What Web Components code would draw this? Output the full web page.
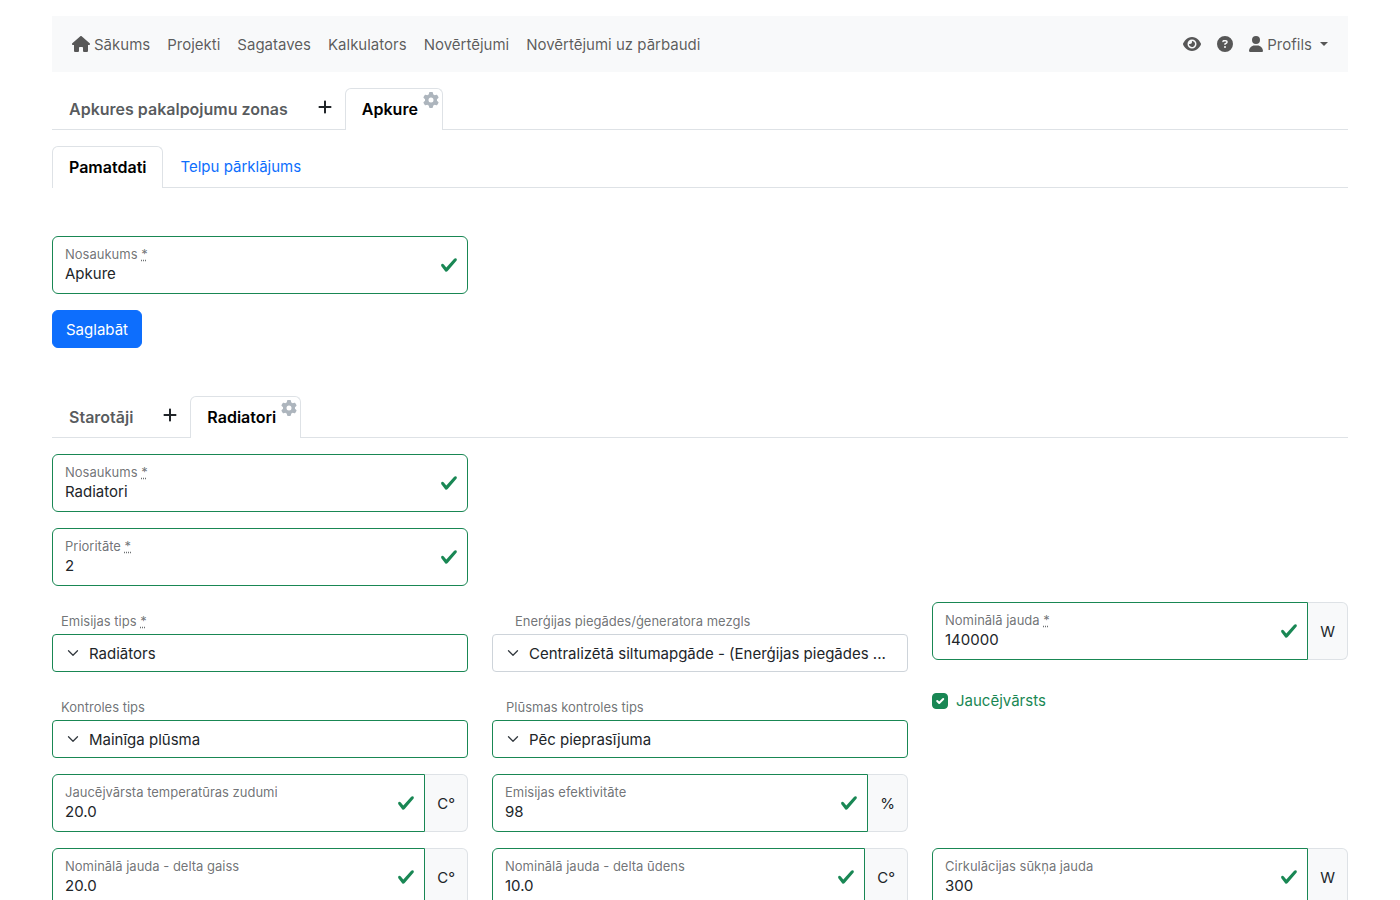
<!DOCTYPE html>
<html lang="lv">
<head>
<meta charset="utf-8">
<meta name="viewport" content="width=device-width, initial-scale=1">
<title>Apkure</title>
<style>
  body {
    margin: 0;
    background: #fff;
    color: #212529;
    font: 400 15px/24px Inter, "Liberation Sans", sans-serif;
    --success: #198754;
    --border: #dee2e6;
    --muted: rgba(33, 37, 41, .65);
    --primary: #0d6efd;
    --light: #f8f9fa;
  }
</style>
</head>
<body>
<page-container>
  <app-navbar>
    <nav-link icon="house">Sākums</nav-link>
    <nav-link>Projekti</nav-link>
    <nav-link>Sagataves</nav-link>
    <nav-link>Kalkulators</nav-link>
    <nav-link>Novērtējumi</nav-link>
    <nav-link>Novērtējumi uz pārbaudi</nav-link>
    <nav-link slot="end" icon="eye" label="Skats"></nav-link>
    <nav-link slot="end" icon="question" label="Palīdzība"></nav-link>
    <nav-link slot="end" icon="user" caret>Profils</nav-link>
  </app-navbar>

  <tab-bar>
    <tab-item kind="title">Apkures pakalpojumu zonas</tab-item>
    <tab-add label="Pievienot zonu"></tab-add>
    <tab-item kind="active" settings>Apkure</tab-item>
  </tab-bar>

  <tab-bar>
    <tab-item kind="active">Pamatdati</tab-item>
    <tab-item kind="link">Telpu pārklājums</tab-item>
  </tab-bar>

  <form-section>
    <form-grid>
      <text-field value="Apkure" required alone>Nosaukums</text-field>
      <submit-button>Saglabāt</submit-button>
    </form-grid>
  </form-section>

  <tab-bar>
    <tab-item kind="title">Starotāji</tab-item>
    <tab-add label="Pievienot starotāju"></tab-add>
    <tab-item kind="active" settings>Radiatori</tab-item>
  </tab-bar>

  <form-grid>
    <text-field value="Radiatori" required alone>Nosaukums</text-field>
    <text-field value="2" required alone>Prioritāte</text-field>
    <select-field value="Radiātors" required valid>Emisijas tips</select-field>
    <select-field value="Centralizētā siltumapgāde - (Enerģijas piegādes ..." indent="wide">Enerģijas piegādes/ģeneratora mezgls</select-field>
    <text-field value="140000" unit="W" required>Nominālā jauda</text-field>
    <select-field value="Mainīga plūsma" valid>Kontroles tips</select-field>
    <select-field value="Pēc pieprasījuma" valid indent="medium">Plūsmas kontroles tips</select-field>
    <check-field>Jaucējvārsts</check-field>
    <text-field value="20.0" unit="C°">Jaucējvārsta temperatūras zudumi</text-field>
    <text-field value="98" unit="%">Emisijas efektivitāte</text-field>
    <text-field value="20.0" unit="C°" first>Nominālā jauda - delta gaiss</text-field>
    <text-field value="10.0" unit="C°">Nominālā jauda - delta ūdens</text-field>
    <text-field value="300" unit="W">Cirkulācijas sūkņa jauda</text-field>
  </form-grid>
</page-container>

<script>
const ICONS = {
  house: ['0 0 576 512', 'M575.8 255.5c0 18-15 32.1-32 32.1h-32l.7 160.2c0 2.7-.2 5.4-.5 8.1V472c0 22.1-17.9 40-40 40H392c-22.1 0-40-17.9-40-40V384c0-17.7-14.3-32-32-32H256c-17.7 0-32 14.300-32 32v88c0 22.100-17.900 40-40 40H104c-22.100 0-40-17.900-40-40V287.600H32c-18 0-32-14-32-32.100c0-9 3-17 10-24L266.400 8c7-7 15-8 22-8s15 2 21 7L564.800 231.500c8 7 12 15 11 24z'],
  eye: ['0 0 576 512', 'M288 32c-80.800 0-145.500 36.800-192.600 80.600C48.600 156 17.300 208 2.500 243.700c-3.300 7.900-3.300 16.700 0 24.600C17.300 304 48.600 356 95.400 399.400C142.500 443.200 207.200 480 288 480s145.500-36.800 192.600-80.600c46.800-43.500 78.100-95.400 93-131.100c3.300-7.900 3.300-16.700 0-24.600c-14.900-35.700-46.200-87.700-93-131.100C433.500 68.800 368.800 32 288 32zM144 256a144 144 0 1 1 288 0a144 144 0 1 1-288 0zm144-64c0 35.300-28.700 64-64 64c-7.100 0-13.900-1.200-20.300-3.300c-5.500-1.800-11.900 1.600-11.700 7.400c.3 6.900 1.300 13.800 3.200 20.700c13.700 51.200 66.400 81.600 117.600 67.900s81.600-66.400 67.900-117.600c-11.100-41.500-47.800-69.400-88.600-71.100c-5.800-.2-9.200 6.100-7.400 11.700c2.100 6.400 3.300 13.200 3.300 20.300z'],
  question: ['0 0 512 512', 'M256 512A256 256 0 1 0 256 0a256 256 0 1 0 0 512zM169.800 165.300c7.900-22.300 29.100-37.300 52.800-37.300h58.300c34.900 0 63.100 28.300 63.100 63.100c0 22.600-12.100 43.500-31.700 54.800L280 264.400c-.2 13-10.900 23.600-24 23.600c-13.300 0-24-10.700-24-24V250.500c0-8.600 4.600-16.500 12.100-20.800l44.300-25.400c4.700-2.700 7.600-7.700 7.600-13.100c0-8.400-6.800-15.100-15.100-15.100H222.600c-3.400 0-6.400 2.100-7.500 5.300l-.4 1.200c-4.400 12.500-18.200 19-30.600 14.600s-19-18.200-14.600-30.600l.4-1.200zM224 352a32 32 0 1 1 64 0a32 32 0 1 1-64 0z'],
  user: ['0 0 448 512', 'M224 256A128 128 0 1 0 224 0a128 128 0 1 0 0 256zm-45.700 48C79.800 304 0 383.800 0 482.300C0 498.700 13.300 512 29.700 512H418.300c16.400 0 29.700-13.300 29.700-29.700C448 383.800 368.200 304 269.700 304H178.300z'],
  gear: ['0 0 512 512', 'M495.900 166.600c3.200 8.700.5 18.400-6.400 24.600l-43.300 39.400c1.100 8.300 1.700 16.800 1.700 25.400s-.6 17.100-1.700 25.400l43.300 39.400c6.900 6.200 9.600 15.900 6.400 24.600c-4.400 11.900-9.700 23.300-15.800 34.300l-4.700 8.100c-6.600 11-14 21.400-22.100 31.200c-5.900 7.200-15.700 9.600-24.500 6.800l-55.700-17.700c-13.400 10.300-28.200 18.900-44 25.400l-12.500 57.100c-2 9.100-9 16.300-18.200 17.800c-13.800 2.300-28 3.500-42.500 3.500s-28.700-1.200-42.500-3.500c-9.200-1.500-16.200-8.700-18.200-17.800l-12.500-57.100c-15.800-6.500-30.600-15.100-44-25.400L83.100 425.900c-8.800 2.800-18.600.3-24.500-6.800c-8.100-9.800-15.500-20.200-22.100-31.200l-4.700-8.100c-6.100-11-11.400-22.400-15.800-34.300c-3.200-8.700-.5-18.400 6.400-24.600l43.300-39.400C64.600 273.100 64 264.600 64 256s.6-17.100 1.700-25.400L22.400 191.200c-6.900-6.200-9.600-15.900-6.400-24.600c4.400-11.900 9.700-23.300 15.800-34.300l4.700-8.100c6.600-11 14-21.400 22.100-31.200c5.900-7.200 15.700-9.600 24.500-6.800l55.700 17.700c13.400-10.300 28.200-18.900 44-25.400l12.500-57.100c2-9.100 9-16.300 18.200-17.800C227.300 1.200 241.500 0 256 0s28.700 1.200 42.500 3.500c9.200 1.500 16.200 8.700 18.200 17.800l12.500 57.100c15.800 6.500 30.600 15.100 44 25.400l55.700-17.700c8.800-2.800 18.600-.3 24.500 6.800c8.100 9.800 15.500 20.200 22.100 31.200l4.700 8.100c6.100 11 11.400 22.400 15.800 34.300zM256 336a80 80 0 1 0 0-160a80 80 0 1 0 0 160z'],
  plus: ['0 0 448 512', 'M256 80c0-17.700-14.300-32-32-32s-32 14.300-32 32V224H48c-17.700 0-32 14.300-32 32s14.300 32 32 32H192V432c0 17.700 14.300 32 32 32s32-14.300 32-32V288H400c17.700 0 32-14.300 32-32s-14.300-32-32-32H256V80z'],
  valid: ['0 0 8 8', 'M2.300 6.730.600 4.530c-.4-1.040.46-1.400 1.100-.8l1.100 1.400 3.400-3.800c.6-.63 1.600-.27 1.200.7l-4 4.600c-.43.5-.8.4-1.100.1z']
};
const icon = name => {
  const [box, d] = ICONS[name];
  return `<svg viewBox="${box}" aria-hidden="true"><path fill="currentColor" d="${d}"/></svg>`;
};
const base = '*{box-sizing:border-box} svg{display:block;flex:none}';
const star = '<abbr title="obligāts">*</abbr>';

function define(name, css, render) {
  customElements.define(name, class extends HTMLElement {
    connectedCallback() {
      if (this.shadowRoot) return;
      this.attachShadow({ mode: 'open' }).innerHTML =
        `<style>${base}${css}</style>${render(this)}`;
    }
  });
}

define('page-container', `
  :host{display:block;box-sizing:border-box;max-width:1320px;margin:0 auto;padding:16px 12px}
  main{display:flex;flex-direction:column;gap:16px}`,
  () => '<main><slot></slot></main>');

define('app-navbar', `
  :host{display:block}
  nav{display:flex;justify-content:space-between;align-items:center;min-height:56px;padding:8px 12px;background:var(--light)}
  div{display:flex}
  .start{gap:1px}`,
  () => '<nav><div class="start"><slot></slot></div><div><slot name="end"></slot></div></nav>');

define('nav-link', `
  :host{display:block}
  a{display:flex;align-items:center;gap:4px;height:40px;padding:0 8px;color:rgba(0,0,0,.65);text-decoration:none;white-space:nowrap}
  svg{height:16px}
  .text{padding-top:1px}
  .caret{margin-left:4px;border:4px solid transparent;border-top-color:currentColor;border-bottom:0}`,
  el => {
    const name = el.getAttribute('icon');
    const label = el.getAttribute('label');
    return `<a href="#"${label ? ` aria-label="${label}"` : ''}>${name ? icon(name) : ''}${label ? '' : '<span class="text"><slot></slot></span>'}${el.hasAttribute('caret') ? '<span class="caret"></span>' : ''}</a>`;
  });

define('tab-bar', `
  :host{display:block}
  nav{display:flex;height:42px;box-shadow:inset 0 -1px var(--border)}`,
  () => '<nav><slot></slot></nav>');

define('tab-item', `
  :host{display:block;position:relative}
  a{display:block;height:42px;padding:8px 16px;border:1px solid transparent;border-bottom:0;border-radius:6px 6px 0 0;text-decoration:none;white-space:nowrap}
  .title{font-size:16px;font-weight:600;color:rgba(33,37,41,.75)}
  .active{font-size:16px;font-weight:600;color:#000;background:#fff;border-color:var(--border)}
  .link{color:var(--primary)}
  .settings{padding-right:24px}
  button{position:absolute;top:4px;right:4px;padding:0;border:0;background:none;color:#adb5bd}
  button svg{width:16px;height:16px}`,
  el => {
    const s = el.hasAttribute('settings');
    return `<a href="#" class="${el.getAttribute('kind')}${s ? ' settings' : ''}"><slot></slot></a>${s ? `<button type="button" aria-label="Iestatījumi">${icon('gear')}</button>` : ''}`;
  });

define('tab-add', `
  :host{display:block}
  button{display:flex;justify-content:center;align-items:center;width:40px;height:38px;padding:0;border:0;background:none;color:#212529}
  svg{height:16px}`,
  el => `<button type="button" aria-label="${el.getAttribute('label')}">${icon('plus')}</button>`);

define('form-section', `
  :host{display:block;padding:32px 0}`,
  () => '<slot></slot>');

define('form-grid', `
  :host{display:block}
  form{display:grid;grid-template-columns:repeat(3,minmax(0,1fr));gap:16px 24px;align-items:start}
  ::slotted([alone]){grid-column:1 / -1;width:calc((100% - 48px) / 3)}
  ::slotted([first]){grid-column-start:1}`,
  () => '<form><slot></slot></form>');

define('text-field', `
  :host{display:block}
  .group{display:flex;height:58px}
  .box{display:flex;align-items:center;flex:1;min-width:0;padding:0 9px 0 12px;border:1px solid var(--success);border-radius:6px;background:#fff}
  .box.joined{border-radius:6px 0 0 6px}
  .text{flex:1;min-width:0;padding-top:2px}
  label{display:block;font-size:13px;line-height:16px;color:var(--muted)}
  abbr{text-decoration:underline dotted}
  input{display:block;width:100%;height:24px;padding:0;border:0;outline:0;background:none;font:inherit;color:inherit}
  svg{width:18px;height:18px;color:var(--success)}
  .unit{display:flex;align-items:center;justify-content:center;padding:2px 12px 0;border:1px solid var(--border);border-left:0;border-radius:0 6px 6px 0;background:var(--light)}`,
  el => {
    const unit = el.getAttribute('unit');
    return `<div class="group"><div class="box${unit ? ' joined' : ''}"><div class="text"><label for="f"><slot></slot>${el.hasAttribute('required') ? ' ' + star : ''}</label><input id="f" type="text" value="${el.getAttribute('value')}"></div>${icon('valid')}</div>${unit ? `<span class="unit">${unit}</span>` : ''}</div>`;
  });

define('select-field', `
  :host{display:block}
  label{display:block;height:32px;padding:10px 9px 0;font-size:13px;line-height:18px;color:var(--muted)}
  label.medium{padding-left:14px}
  label.wide{padding-left:23px}
  abbr{text-decoration:underline dotted}
  .box{display:grid}
  .box > *{grid-area:1 / 1}
  select{appearance:none;width:100%;height:38px;padding:2px 12px 0 36px;border:1px solid #ced4da;border-radius:4px;background:#fff;font:inherit;color:inherit;text-overflow:ellipsis}
  select.valid{border-color:var(--success)}
  svg{width:12px;height:12px;margin-left:15px;align-self:center;pointer-events:none}`,
  el => `<label for="s" class="${el.getAttribute('indent') || ''}"><slot></slot>${el.hasAttribute('required') ? ' ' + star : ''}</label>
    <div class="box"><select id="s" class="${el.hasAttribute('valid') ? 'valid' : ''}"><option>${el.getAttribute('value')}</option></select>
    <svg viewBox="0 0 16 16" aria-hidden="true"><path fill="none" stroke="#343a40" stroke-linecap="round" stroke-linejoin="round" stroke-width="1.700" d="m2 5 6 6 6-6"/></svg></div>`);

define('check-field', `
  :host{display:block}
  label{display:flex;align-items:center;gap:8px;color:var(--success)}
  .mark{display:grid}
  .mark > *{grid-area:1 / 1}
  .text{padding-top:1px}
  input{appearance:none;width:16px;height:16px;margin:0;border:1px solid var(--success);border-radius:4px;background:#fff}
  input:checked{background:var(--success)}
  svg{width:16px;height:16px;pointer-events:none}
  input:not(:checked) + svg{visibility:hidden}`,
  () => `<label><span class="mark"><input type="checkbox" checked><svg viewBox="0 0 20 20" aria-hidden="true"><path fill="none" stroke="#fff" stroke-linecap="round" stroke-linejoin="round" stroke-width="2.500" d="m6.500 10 2.500 2.500 5-5"/></svg></span><span class="text"><slot></slot></span></label>`);

define('submit-button', `
  :host{display:block}
  button{height:38px;padding:2px 13px 0;border:1px solid var(--primary);border-radius:6px;background:var(--primary);font:inherit;color:#fff}`,
  () => '<button type="submit"><slot></slot></button>');
</script>
</body>
</html>
